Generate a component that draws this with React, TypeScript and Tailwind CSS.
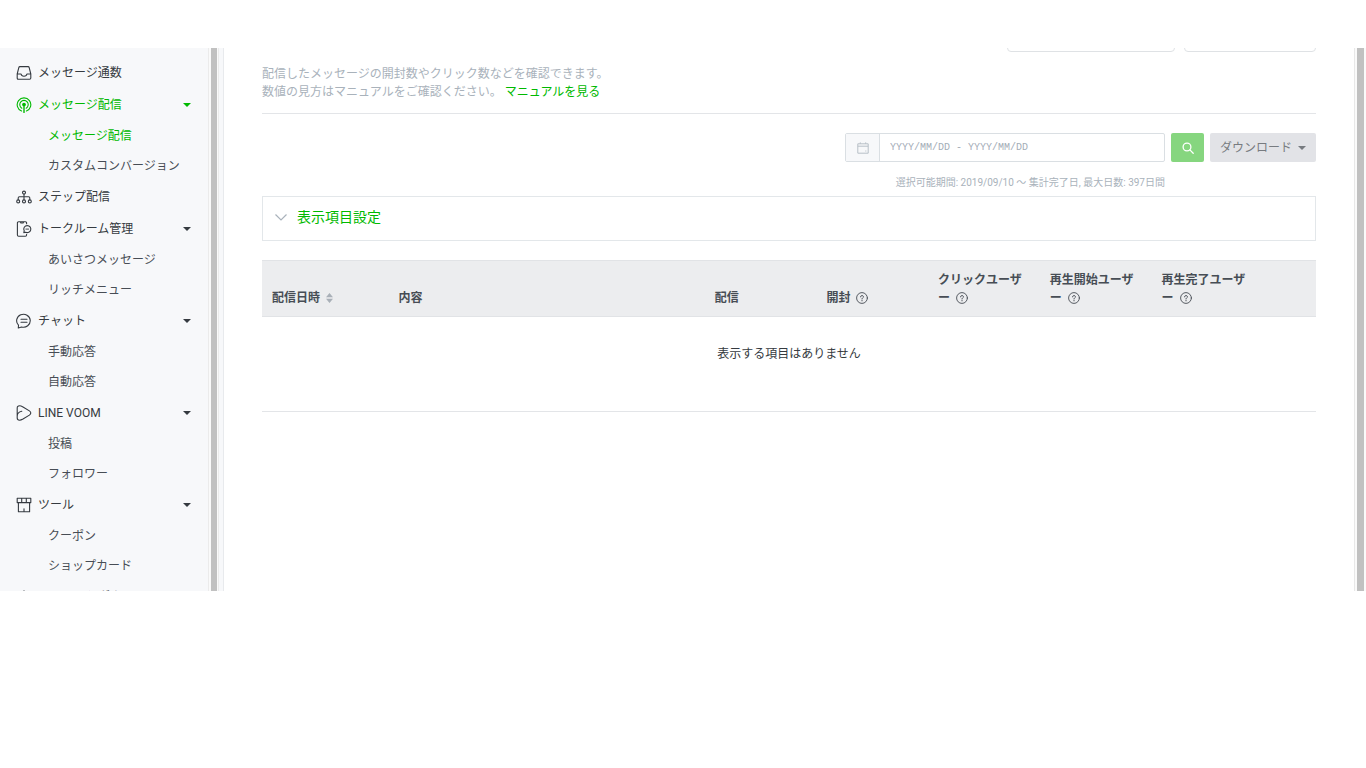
import { useState, type ReactNode } from "react";

type NavSection = {
  label: string;
  icon: ReactNode;
  children?: string[];
  active?: boolean;
};

function Icon({ children }: { children: ReactNode }) {
  return (
    <svg
      viewBox="0 0 16 16"
      className="h-4 w-4 shrink-0"
      fill="none"
      stroke="currentColor"
      strokeWidth="1.1"
      strokeLinecap="round"
      strokeLinejoin="round"
      aria-hidden="true"
    >
      {children}
    </svg>
  );
}

const SECTIONS: NavSection[] = [
  {
    label: "メッセージ通数",
    icon: (
      <Icon>
        <path d="M1.200 9 2.800 2.600Q3 1.600 4 1.600h8q1 0 1.200 1L14.800 9v4.100q0 1.200-1.200 1.200H2.400q-1.200 0-1.200-1.200zM1.200 9h3.900c.2 1.500 1.400 2.300 2.900 2.300s2.700-.8 2.900-2.300h3.900" />
      </Icon>
    ),
  },
  {
    label: "メッセージ配信",
    active: true,
    icon: (
      <Icon>
        <path d="M5.600 14A6.800 6.800 0 1 1 10.400 14M5.800 11.200a4.200 4.200 0 1 1 4.400 0" />
        <circle cx="8" cy="7.500" r="1.300" fill="currentColor" />
        <path d="M8 8v7.400" strokeWidth="1.400" />
      </Icon>
    ),
    children: ["メッセージ配信", "カスタムコンバージョン"],
  },
  {
    label: "ステップ配信",
    icon: (
      <Icon>
        <circle cx="8" cy="3.600" r="1.500" />
        <circle cx="2.200" cy="12.400" r="1.500" />
        <circle cx="8" cy="12.400" r="1.500" />
        <circle cx="13.800" cy="12.400" r="1.500" />
        <path d="M8 5.200v5.600M2.200 10.800V9q0-1.200 1.200-1.200h9.200q1.200 0 1.200 1.200v1.800" />
      </Icon>
    ),
  },
  {
    label: "トークルーム管理",
    icon: (
      <Icon>
        <path d="M10.600 2.800V2q0-1.200-1.200-1.200H2.600Q1.400.8 1.400 2v12q0 1.200 1.200 1.200h6.800q1.200 0 1.200-1.200v-.6M4.400 1l.5 1h2.200l.5-1" />
        <path d="M11.300 4.600a3.500 3.500 0 1 1-1.600 6.600l-1.900.4.4-1.800a3.500 3.500 0 0 1 3.100-5.200z" />
        <path d="M9.900 8.100h2.800" strokeWidth="0.900" />
      </Icon>
    ),
    children: ["あいさつメッセージ", "リッチメニュー"],
  },
  {
    label: "チャット",
    icon: (
      <Icon>
        <path d="M2.500 12.200A6.800 6.500 0 1 1 5.600 14L2.300 15zM5 6.300h6M5 9.300h6" />
      </Icon>
    ),
    children: ["手動応答", "自動応答"],
  },
  {
    label: "LINE VOOM",
    icon: (
      <Icon>
        <path d="M5.800 6.200Q1.200 7.200 1.200 11.200V3Q1.200.8 3.600.8q1.200 0 3.400 1.200l6.400 3.900q2.800 2 0 4.200L7 14q-2.200 1.200-3.400 1.200-2.400 0-2.400-2.200v-2" />
      </Icon>
    ),
    children: ["投稿", "フォロワー"],
  },
  {
    label: "ツール",
    icon: (
      <Icon>
        <path d="M1.200 1.200h13.600v4.400H1.200zM5.700 1.200v4.400M10.300 1.200v4.400M2.400 5.600v9.200h11.200V5.600M8 11.800v3" />
      </Icon>
    ),
    children: ["クーポン", "ショップカード"],
  },
  {
    label: "ファイルとダウンロード",
    icon: (
      <Icon>
        <path d="M8 1.800v8.400M4.800 7.200 8 10.400l3.200-3.200M2 12v2.600h12V12" />
      </Icon>
    ),
  },
];

const COLUMNS = [
  { label: "配信日時", width: "w-[12%]", sortable: true },
  { label: "内容", width: "w-[30%]" },
  { label: "配信", width: "w-[10.6%]" },
  { label: "開封", width: "w-[10.6%]", help: true },
  { label: "クリックユーザー", width: "w-[10.6%]", help: true },
  { label: "再生開始ユーザー", width: "w-[10.6%]", help: true },
  { label: "再生完了ユーザー", width: "w-[10.6%]", help: true },
  { label: "", width: "w-[5%]" },
];

function Caret() {
  return (
    <svg viewBox="0 0 8 4" className="h-1 w-2 shrink-0" fill="currentColor" aria-hidden="true">
      <path d="M0 0h8L4 4z" />
    </svg>
  );
}

function HelpIcon() {
  return (
    <svg
      viewBox="0 0 12 12"
      className="ml-1.5 inline-block h-3 w-3 align-[-2px]"
      fill="none"
      stroke="currentColor"
      strokeLinecap="round"
      aria-hidden="true"
    >
      <circle cx="6" cy="6" r="5.400" strokeWidth="0.900" />
      <path d="M4.600 4.900a1.400 1.300 0 1 1 2 1.100Q6 6.300 6 7" />
      <path d="M6 8.700h.01" strokeWidth="1.200" />
    </svg>
  );
}

function SortIcon() {
  return (
    <svg viewBox="0 0 7 10" className="ml-1.5 inline-block h-2.5 w-[7px] align-[-1px] text-[#a9b0b8]" fill="currentColor" aria-hidden="true">
      <path d="M3.500 0 7 4.300H0zM3.500 10 0 5.700h7z" />
    </svg>
  );
}

function Sidebar() {
  return (
    <nav className="w-52 shrink-0 overflow-hidden bg-[#f7f8fa]">
      <ul className="-mt-[23px]">
        <li className="flex h-8 items-center pl-4">
          <Icon>
            <path d="M1.200 1.500v12.800h8M12 1.500l-1 12" strokeWidth="1.500" />
          </Icon>
        </li>
        {SECTIONS.map((section) => (
          <li key={section.label}>
            <a
              href="#"
              className={`flex h-8 items-center gap-1.5 pr-[17px] pl-4 whitespace-nowrap ${
                section.active ? "text-[#00b900]" : "text-[#353a40]"
              }`}
            >
              {section.icon}
              <span className="flex-1">{section.label}</span>
              {section.children && <Caret />}
            </a>
            {section.children && (
              <ul>
                {section.children.map((child) => (
                  <li key={child}>
                    <a
                      href="#"
                      className={`flex h-[30px] items-center pl-12 whitespace-nowrap ${
                        section.active && child === section.label ? "text-[#00b900]" : "text-[#474d55]"
                      }`}
                    >
                      {child}
                    </a>
                  </li>
                ))}
              </ul>
            )}
          </li>
        ))}
      </ul>
    </nav>
  );
}

export default function App() {
  const [period, setPeriod] = useState("");

  return (
    <div
      lang="ja"
      className="flex h-screen flex-col bg-white pt-12 pb-[177px] font-[Roboto,'Noto_Sans_CJK_JP',sans-serif] text-xs leading-[18px] text-[#474d55]"
    >
      <div className="flex min-h-0 flex-1 overflow-hidden">
        <Sidebar />
        <div className="flex w-4 shrink-0 border-r border-[#e8eaed] bg-[#f7f8fa]" aria-hidden="true">
          <div className="w-[11px] border-x border-[#ebebeb] bg-[#fafafa] px-0.5">
            <div className="h-full w-1.5 bg-[#c1c1c1]" />
          </div>
        </div>

        <main className="min-w-0 flex-1 px-[38px]">
          <div className="-mt-7 flex justify-end gap-[9px]">
            <div className="h-8 w-[168px] rounded-sm border border-[#dfe2e5]" />
            <div className="h-8 w-[132px] rounded-sm border border-[#dfe2e5]" />
          </div>

          <div className="mt-[13px] border-b border-[#e3e5e8] pb-3 text-[#a9b2bb]">
            <p>配信したメッセージの開封数やクリック数などを確認できます。</p>
            <p>
              数値の見方はマニュアルをご確認ください。{" "}
              <a href="#" className="text-[#00b900]">
                マニュアルを見る
              </a>
            </p>
          </div>

          <div className="mt-[19px] flex justify-end gap-1.5">
            <div className="w-80">
              <div className="flex h-[29px] rounded-xs border border-[#dadfe3]">
                <label
                  htmlFor="period"
                  aria-label="期間"
                  className="flex w-[34px] items-center justify-center border-r border-[#dadfe3] bg-[#f7f8fa] text-[#b7bfc7]"
                >
                  <svg viewBox="0 0 12 12" className="h-3 w-3" fill="none" stroke="currentColor" aria-hidden="true">
                    <path d="M.8 1.800h10.400v9.400H.8zM.8 4.200h10.400M3.300.4v1.400M8.700.4v1.400M8.300 9h1" />
                  </svg>
                </label>
                <input
                  id="period"
                  value={period}
                  onChange={(e) => setPeriod(e.target.value)}
                  placeholder="YYYY/MM/DD - YYYY/MM/DD"
                  className="min-w-0 flex-1 px-2.5 font-['Liberation_Mono',monospace] text-[10px] outline-none placeholder:text-[#a3adb7]"
                />
              </div>
              <p className="mt-3 text-right text-[10px] whitespace-nowrap text-[#a9b2bb]">
                選択可能期間: 2019/09/10 〜 集計完了日, 最大日数: 397日間
              </p>
            </div>
            <button
              type="button"
              aria-label="検索"
              className="flex h-[29px] w-[33px] items-center justify-center rounded-xs bg-[#86d67f] text-white"
            >
              <svg viewBox="0 0 12 12" className="h-3 w-3" fill="none" stroke="currentColor" strokeWidth="1.300" strokeLinecap="round" aria-hidden="true">
                <circle cx="5" cy="5" r="3.900" />
                <path d="m7.900 7.900 3.300 3.300" />
              </svg>
            </button>
            <button
              type="button"
              className="flex h-[29px] w-[106px] items-center justify-center gap-1.5 rounded-xs bg-[#e2e3e7] text-[#777b80]"
            >
              ダウンロード
              <Caret />
            </button>
          </div>

          <button
            type="button"
            className="mt-1 flex h-[45px] w-full items-center gap-2.5 border border-[#e3e7ea] px-3 pb-[3px] text-[14px] text-[#00b900]"
          >
            <svg viewBox="0 0 12 7" className="h-[7px] w-3 text-[#a9b2bb]" fill="none" stroke="currentColor" strokeWidth="1.200" aria-hidden="true">
              <path d="m.5.500 5.500 5.500L11.500.500" />
            </svg>
            表示項目設定
          </button>

          <table className="mt-[19px] w-full table-fixed border-collapse">
            <thead className="border-y border-[#e1e3e6] bg-[#ecedef]">
              <tr>
                {COLUMNS.map((column, i) => (
                  <th key={i} className={`px-2.5 pt-2.5 pb-[9px] text-left align-bottom font-bold break-all ${column.width}`}>
                    {column.label}
                    {column.sortable && <SortIcon />}
                    {column.help && <HelpIcon />}
                  </th>
                ))}
              </tr>
            </thead>
            <tbody>
              <tr className="border-b border-[#e3e5e8]">
                <td colSpan={COLUMNS.length} className="px-2.5 pt-7 pb-12 text-center text-[#353a40]">
                  表示する項目はありません
                </td>
              </tr>
            </tbody>
          </table>
        </main>

        <div className="w-3 shrink-0 border-l border-[#e8e8e8] bg-[#fafafa] pl-0.5" aria-hidden="true">
          <div className="h-full w-[7px] bg-[#c1c1c1]" />
        </div>
      </div>
    </div>
  );
}
